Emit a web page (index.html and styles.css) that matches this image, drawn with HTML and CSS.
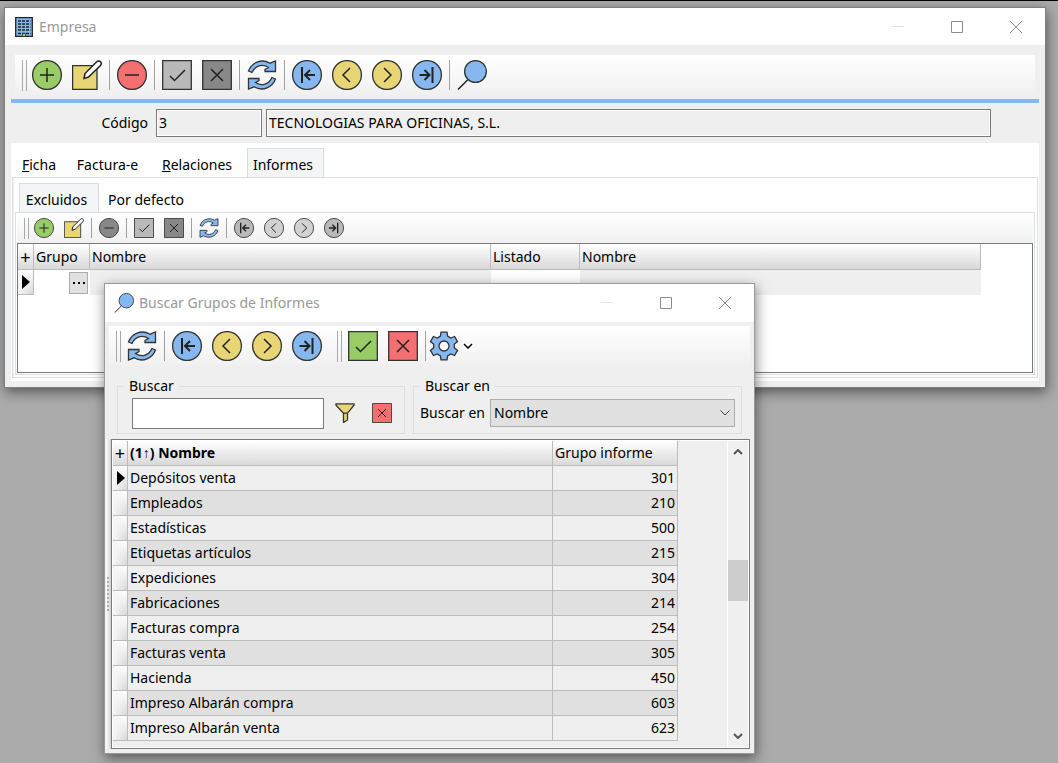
FILE: index.html
```html
<!DOCTYPE html>
<html lang="es">
<head>
<meta charset="utf-8">
<title>Empresa</title>
<link rel="stylesheet" href="styles.css">
</head>
<body>
<svg class="sprite" aria-hidden="true">
  <symbol id="add" viewBox="0 0 30 30"><circle class="shape" cx="15" cy="15" r="14.4"/><path class="stroke" d="M15 8v14M8 15h14"/></symbol>
  <symbol id="remove" viewBox="0 0 30 30"><circle class="shape" cx="15" cy="15" r="14.4"/><path class="stroke" d="M8 15h14"/></symbol>
  <symbol id="edit" viewBox="0 0 30 30"><path class="shape" d="M.6 5.600h24.400v23.800H.6z"/><path class="pen" d="M12 18.500l1-5L24.500 2c2.500-2.500 6.500.5 4 3.500L16.500 17z"/></symbol>
  <symbol id="check" viewBox="0 0 30 30"><path class="shape" d="M.7.7h28.600v28.600H.7z"/><path class="stroke" d="M8 16l4.500 4.500L23 10"/></symbol>
  <symbol id="cross" viewBox="0 0 30 30"><path class="shape" d="M.7.7h28.600v28.600H.7z"/><path class="stroke" d="M9 9l12 12M21 9L9 21"/></symbol>
  <symbol id="refresh" viewBox="0 0 30 30"><path class="shape" d="M1.500 11C4.500 3 14-2 23 3.200L28.500 1v10.500H18v-2l3.500-2C15 3 8 6 5 12.500zM28.500 19C25.500 27 16 32 7 26.800L1.500 29V18.500H12v2l-3.500 2C15 27 22 24 25 17.500z"/></symbol>
  <symbol id="first" viewBox="0 0 30 30"><circle class="shape" cx="15" cy="15" r="14.4"/><path class="stroke heavy" d="M10 7v16M23 15H13.500M18 10l-5 5 5 5"/></symbol>
  <symbol id="prev" viewBox="0 0 30 30"><circle class="shape" cx="15" cy="15" r="14.4"/><path class="stroke" d="M18 8l-7 7 7 7"/></symbol>
  <symbol id="next" viewBox="0 0 30 30"><circle class="shape" cx="15" cy="15" r="14.4"/><path class="stroke" d="M12 8l7 7-7 7"/></symbol>
  <symbol id="last" viewBox="0 0 30 30"><circle class="shape" cx="15" cy="15" r="14.4"/><path class="stroke heavy" d="M20.500 7v16M7.500 15H17M12.500 10l5 5-5 5"/></symbol>
  <symbol id="search" viewBox="0 0 30 30"><path class="stroke" d="M1 29.500L11 19.500"/><circle class="shape" cx="18.500" cy="11.500" r="10.900"/></symbol>
  <symbol id="gear" viewBox="0 0 30 30"><path class="shape" d="M11.400 5.100L12 1.100h6l.6 4L21.800 7l3.800-1.500 2.900 5.100-3.200 2.600v3.600l3.200 2.600-2.900 5.100-3.800-1.500-3.200 1.900-.6 4h-6l-.6-4L8.200 23l-3.800 1.500-2.900-5.100 3.200-2.600v-3.600l-3.200-2.600 2.900-5.100L8.200 7z"/><circle class="hole" cx="15" cy="15" r="5"/></symbol>
  <symbol id="filter" viewBox="0 0 20 20"><path class="shape" d="M1 .8h18v1.400l-6.500 8V17l-4 2.500v-9.300L1 2.200zM8.500 10.200h4"/></symbol>
</svg>

<main class="desktop">
  <section class="window company" aria-label="Empresa">
    <header class="titlebar">
      <svg class="building" viewBox="0 0 18 20" aria-hidden="true"><path class="wall" d="M.7.700h16.600v18.600H.7z"/><path class="panes" d="M3 4h12.500M3 7h12.500M3 10h12.500M3 13h12.500M3 16.500h12.500"/><path class="door" d="M7.500 16.500h3v3h-3z"/></svg>
      <h1>Empresa</h1>
      <div class="controls">
        <button aria-label="Minimizar"><svg viewBox="0 0 12 12"><path class="faint" d="M0 5.500h12"/></svg></button>
        <button aria-label="Maximizar"><svg viewBox="0 0 12 12"><path d="M.5.500h11v11H.5z"/></svg></button>
        <button aria-label="Cerrar"><svg viewBox="0 0 12 12"><path d="M0 0l12 12M12 0L0 12"/></svg></button>
      </div>
    </header>
    <div class="company-body">
      <div class="toolbar" role="toolbar">
        <span class="grip"></span>
        <button class="green" aria-label="Añadir"><svg><use href="#add"/></svg></button>
        <button class="yellow" aria-label="Editar"><svg><use href="#edit"/></svg></button>
        <span class="sep"></span>
        <button class="red" aria-label="Eliminar"><svg><use href="#remove"/></svg></button>
        <span class="sep"></span>
        <button class="silver" aria-label="Aceptar"><svg><use href="#check"/></svg></button>
        <button class="gray" aria-label="Cancelar"><svg><use href="#cross"/></svg></button>
        <span class="sep"></span>
        <button class="blue" aria-label="Actualizar"><svg><use href="#refresh"/></svg></button>
        <span class="sep"></span>
        <button class="blue" aria-label="Primero"><svg><use href="#first"/></svg></button>
        <button class="yellow" aria-label="Anterior"><svg><use href="#prev"/></svg></button>
        <button class="yellow" aria-label="Siguiente"><svg><use href="#next"/></svg></button>
        <button class="blue" aria-label="Último"><svg><use href="#last"/></svg></button>
        <span class="sep"></span>
        <button class="blue" aria-label="Buscar"><svg><use href="#search"/></svg></button>
      </div>
      <hr class="accent">
      <div class="code-row">
        <label for="code">Código</label>
        <input id="code" class="field code" value="3" readonly>
        <input class="field name" aria-label="Nombre de la empresa" value="TECNOLOGIAS PARA OFICINAS, S.L." readonly>
      </div>
      <div class="sheet">
        <div class="tabs main-tabs" role="tablist">
          <button role="tab"><u>F</u>icha</button>
          <button role="tab">Factura-e</button>
          <button role="tab"><u>R</u>elaciones</button>
          <button role="tab" class="active" aria-selected="true">Informes</button>
        </div>
        <div class="page outer-page">
          <div class="tabs sub-tabs" role="tablist">
            <button role="tab" class="active" aria-selected="true">Excluidos</button>
            <button role="tab">Por defecto</button>
          </div>
          <div class="page inner-page">
            <div class="toolbar small" role="toolbar">
              <span class="grip"></span>
              <button class="green" aria-label="Añadir"><svg><use href="#add"/></svg></button>
              <button class="yellow" aria-label="Editar"><svg><use href="#edit"/></svg></button>
              <span class="sep"></span>
              <button class="gray" aria-label="Eliminar"><svg><use href="#remove"/></svg></button>
              <span class="sep"></span>
              <button class="silver" aria-label="Aceptar"><svg><use href="#check"/></svg></button>
              <button class="gray" aria-label="Cancelar"><svg><use href="#cross"/></svg></button>
              <span class="sep"></span>
              <button class="blue" aria-label="Actualizar"><svg><use href="#refresh"/></svg></button>
              <span class="sep"></span>
              <button class="silver" aria-label="Primero"><svg><use href="#first"/></svg></button>
              <button class="pale" aria-label="Anterior"><svg><use href="#prev"/></svg></button>
              <button class="pale" aria-label="Siguiente"><svg><use href="#next"/></svg></button>
              <button class="silver" aria-label="Último"><svg><use href="#last"/></svg></button>
            </div>
            <div class="report-grid">
              <table>
                <colgroup><col class="c-mark"><col class="c-group"><col class="c-name"><col class="c-list"><col class="c-name"></colgroup>
                <thead><tr><th class="plus">+</th><th>Grupo</th><th>Nombre</th><th>Listado</th><th>Nombre</th></tr></thead>
                <tbody><tr><td class="mark"><i class="pointer"></i></td><td class="pick"><button class="more" aria-label="Elegir grupo"><svg viewBox="0 0 12 2"><path d="M0 0h2v2H0zM5 0h2v2H5zM10 0h2v2h-2z"/></svg></button></td><td class="locked"></td><td></td><td class="locked"></td></tr></tbody>
              </table>
            </div>
          </div>
        </div>
      </div>
    </div>
  </section>

  <section class="window finder" aria-label="Buscar Grupos de Informes">
    <header class="titlebar">
      <svg class="lens blue" aria-hidden="true"><use href="#search"/></svg>
      <h2>Buscar Grupos de Informes</h2>
      <div class="controls">
        <button aria-label="Minimizar"><svg viewBox="0 0 12 12"><path class="faint" d="M0 5.500h12"/></svg></button>
        <button aria-label="Maximizar"><svg viewBox="0 0 12 12"><path d="M.5.500h11v11H.5z"/></svg></button>
        <button aria-label="Cerrar"><svg viewBox="0 0 12 12"><path d="M0 0l12 12M12 0L0 12"/></svg></button>
      </div>
    </header>
    <div class="finder-body">
      <div class="toolbar" role="toolbar">
        <span class="grip"></span>
        <button class="blue" aria-label="Actualizar"><svg><use href="#refresh"/></svg></button>
        <span class="sep"></span>
        <button class="blue" aria-label="Primero"><svg><use href="#first"/></svg></button>
        <button class="yellow" aria-label="Anterior"><svg><use href="#prev"/></svg></button>
        <button class="yellow" aria-label="Siguiente"><svg><use href="#next"/></svg></button>
        <button class="blue" aria-label="Último"><svg><use href="#last"/></svg></button>
        <span class="grip second"></span>
        <button class="green" aria-label="Aceptar"><svg><use href="#check"/></svg></button>
        <button class="red" aria-label="Cancelar"><svg><use href="#cross"/></svg></button>
        <span class="sep"></span>
        <button class="blue options" aria-label="Opciones"><svg><use href="#gear"/></svg><svg class="caret" viewBox="0 0 10 6"><path d="M1 1l4 4 4-4"/></svg></button>
      </div>
      <div class="filters">
        <fieldset class="search-box">
          <legend>Buscar</legend>
          <input class="query" aria-label="Buscar">
          <button class="yellow mini" aria-label="Filtrar"><svg><use href="#filter"/></svg></button>
          <button class="red mini" aria-label="Quitar filtro"><svg><use href="#cross"/></svg></button>
        </fieldset>
        <fieldset class="scope-box">
          <legend>Buscar en</legend>
          <label for="scope">Buscar en</label>
          <div class="select-wrap">
            <select id="scope"><option>Nombre</option></select>
            <svg class="chevron" viewBox="0 0 10 6"><path d="M.5.500L5 5 9.500.500"/></svg>
          </div>
        </fieldset>
      </div>
      <div class="results">
        <div class="splitter"><span></span></div>
        <div class="result-grid">
          <div class="table-area">
            <table>
              <colgroup><col class="c-mark"><col><col class="c-code"></colgroup>
              <thead><tr><th class="plus">+</th><th class="sorted">(1<span class="arrow">↑</span>) Nombre</th><th>Grupo informe</th></tr></thead>
              <tbody>
                <tr><td class="mark"><i class="pointer"></i></td><td>Depósitos venta</td><td>301</td></tr>
                <tr><td class="mark"></td><td>Empleados</td><td>210</td></tr>
                <tr><td class="mark"></td><td>Estadísticas</td><td>500</td></tr>
                <tr><td class="mark"></td><td>Etiquetas artículos</td><td>215</td></tr>
                <tr><td class="mark"></td><td>Expediciones</td><td>304</td></tr>
                <tr><td class="mark"></td><td>Fabricaciones</td><td>214</td></tr>
                <tr><td class="mark"></td><td>Facturas compra</td><td>254</td></tr>
                <tr><td class="mark"></td><td>Facturas venta</td><td>305</td></tr>
                <tr><td class="mark"></td><td>Hacienda</td><td>450</td></tr>
                <tr><td class="mark"></td><td>Impreso Albarán compra</td><td>603</td></tr>
                <tr><td class="mark"></td><td>Impreso Albarán venta</td><td>623</td></tr>
              </tbody>
            </table>
          </div>
          <div class="scrollbar">
            <button aria-label="Subir"><svg viewBox="0 0 10 6"><path d="M1 5l4-4 4 4"/></svg></button>
            <div class="track"><span class="thumb"></span></div>
            <button aria-label="Bajar"><svg viewBox="0 0 10 6"><path d="M1 1l4 4 4-4"/></svg></button>
          </div>
        </div>
      </div>
    </div>
  </section>
</main>
</body>
</html>
```

FILE: styles.css
```css
* { box-sizing: border-box; }

body {
  margin: 0;
  font-family: "Noto Sans", "Open Sans", sans-serif;
  font-size: 14px;
  line-height: 20px;
  color: #000;
}

button, input, select { font: inherit; color: inherit; margin: 0; }
button { border: 0; padding: 0; background: none; }
svg { display: block; fill: none; }

.sprite { position: absolute; width: 0; height: 0; }
.shape { fill: var(--tone); stroke: #333; stroke-width: 1.3; }
.stroke { stroke: #222; stroke-width: 1.5; }
.heavy { stroke-width: 2; }
.pen { fill: #fff; stroke: #222; stroke-width: 1.5; }
.hole { fill: #fafafa; stroke: #333; stroke-width: 1.3; }

.green { --tone: #99cc66; }
.yellow { --tone: #e8d575; }
.red { --tone: #f47070; }
.blue { --tone: #85b8f0; }
.silver { --tone: #b9b9b9; }
.gray { --tone: #888; }
.pale { --tone: #d2d2d2; }

.desktop {
  position: relative;
  min-height: 100vh;
  overflow: hidden;
  background: #ababab;
  border-top: 1px solid #000;
}

/* Windows */
.window {
  position: absolute;
  background: #efefef;
  border: 1px solid #808080;
  box-shadow: 1px 4px 12px rgba(0, 0, 0, .5);
}
.company { left: 4px; right: 12px; top: 6px; }
.finder { left: 104px; top: 282px; width: 651px; border-color: #999; }

.titlebar {
  display: flex;
  align-items: center;
  height: 37px;
  background: #fff;
  color: #999;
  padding-left: 10px;
}
.finder .titlebar { height: 38px; padding-left: 9px; }
.titlebar h1, .titlebar h2 { margin: 0; font-size: 14px; font-weight: 400; }
.building { width: 18px; height: 20px; margin-right: 6px; }
.wall { fill: #85b8f0; stroke: #222; stroke-width: 1.3; }
.panes { stroke: #222; stroke-width: 1.5; stroke-dasharray: 3 1; }
.door { fill: #99cc66; stroke: #222; stroke-width: .6; }
.lens { width: 20px; height: 20px; margin-right: 5px; }
.controls { display: flex; margin-left: auto; }
.controls button { width: 59px; height: 37px; display: grid; place-items: center; }
.controls svg { width: 12px; height: 12px; stroke: #8c8c8c; }
.controls .faint { stroke: #e2e2e2; }

/* Toolbars */
.toolbar {
  display: flex;
  align-items: center;
  height: 40px;
  padding-left: 7px;
  background: linear-gradient(#fff, #f0f0f0);
}
.toolbar button { width: 40px; height: 40px; display: grid; place-items: center; }
.toolbar button svg { width: 30px; height: 30px; }
.grip {
  width: 5px;
  height: 31px;
  border: solid #a8a8a8;
  border-width: 0 1px;
}
.grip.second { margin: 0 1px 0 10px; }
.sep { width: 5px; height: 30px; background: linear-gradient(#a0a0a0, #a0a0a0) center / 1px no-repeat; }
.toolbar.small { height: 30px; }
.toolbar.small button { width: 30px; height: 30px; }
.toolbar.small button svg { width: 20px; height: 20px; }
.small .grip { height: 21px; }
.small .sep { height: 20px; }
.toolbar .options { display: flex; align-items: center; gap: 4px; width: 50px; padding-left: 1px; }
.toolbar .options .caret { width: 10px; height: 6px; stroke: #000; stroke-width: 1.5; }

/* Company window */
.company-body { padding: 10px 6px 6px; }
.company-body > .toolbar { margin: 0 4px; }
.accent { height: 4px; margin: 4px 0 6px; border: 0; background: #85b8f0; }
.code-row { display: flex; align-items: center; padding-right: 48px; }
.code-row label { flex: 0 0 145px; padding-right: 8px; text-align: right; }
.field {
  height: 28px;
  padding: 0 2px 2px;
  border: 1px solid #7a7a7a;
  border-radius: 0;
  background: #efefef;
  box-shadow: inset 0 0 0 1px #fff;
}
.field.code { width: 106px; margin-right: 4px; }
.field.name { flex: 1; min-width: 0; }

.sheet { margin-top: 6px; padding: 5px 1px 3px; background: #fff; }
.tabs { display: flex; }
.tabs button { height: 29px; padding: 4px 0 0; border: 1px solid transparent; border-bottom: 0; white-space: nowrap; }
.tabs .active { background: #f3f5f7; border-color: #dadcdf; }
.main-tabs { padding-left: 4px; }
.main-tabs button:nth-child(1) { width: 46px; }
.main-tabs button:nth-child(2) { width: 91px; }
.main-tabs button:nth-child(3) { width: 88px; }
.main-tabs button:nth-child(4) { width: 77px; margin-left: 6px; padding-right: 5px; }
.page { border: 1px solid #dcdfe2; }
.outer-page { padding: 5px 2px 2px 2px; box-shadow: inset 1px 0 #f0f0f0; }
.sub-tabs { padding-left: 4px; }
.sub-tabs button:nth-child(1) { width: 80px; padding-right: 5px; }
.sub-tabs button:nth-child(2) { width: 94px; }
.inner-page { padding: 0 1px 1px; }
.inner-page .toolbar { padding-left: 7px; }

/* Tables */
table { border-collapse: separate; border-spacing: 0; table-layout: fixed; }
th, td { height: 25px; padding: 0 2px; overflow: hidden; white-space: nowrap; }
th {
  height: 26px;
  text-align: left;
  font-weight: 400;
  border: solid #bcbcbc;
  border-width: 0 1px 1px 0;
  background: linear-gradient(#fff, #d9d9d9);
}
.plus { padding: 0; text-align: center; font-size: 18px; }
.c-mark { width: 16px; }
.c-group { width: 56px; }
.c-name { width: 401px; }
.c-list { width: 89px; }
.c-code { width: 125px; }
.mark { padding: 0 0 0 4px; background: linear-gradient(90deg, #f6f6f6, transparent), linear-gradient(#fff, #d6d6d6); border: solid #bcbcbc; border-width: 0 1px 1px 0; }
.pointer { display: block; width: 8px; height: 14px; background: #000; clip-path: polygon(0 0, 100% 50%, 0 100%); }

.report-grid { height: 130px; overflow: hidden; border: 1px solid #7a7a7a; background: #fff; }
.report-grid table { width: 963px; }
.locked { background: #efefef; }
.pick { padding: 0 2px 0 1px; }
.more { display: grid; place-items: center; width: 19px; height: 22px; margin-left: auto; border: 1px solid #adadad; background: #e1e1e1; }
.more svg { width: 12px; height: 2px; fill: #000; }

/* Finder window */
.finder-body { padding: 4px 4px 4px 1px; }
.finder-body > .toolbar { margin-left: 3px; }
.finder-body > .toolbar > .grip:first-child { margin-right: 1px; }
.filters { display: flex; gap: 8px; padding: 10px 8px 5px 11px; }
fieldset { display: flex; align-items: center; min-width: 0; height: 58px; margin: 0; padding: 0 0 3px; border: 1px solid #dedede; }
legend { padding: 0 5px; line-height: 20px; }
.search-box { flex: 0 0 288px; padding-left: 14px; }
.search-box legend { margin-left: -8px; }
.query { width: 192px; height: 31px; border: 1px solid #7a7a7a; border-radius: 0; background: #fff; }
.mini { width: 20px; height: 20px; margin-left: 11px; }
.mini svg { width: 20px; height: 20px; }
.mini + .mini { margin-left: 17px; }
.scope-box { flex: 1; padding-left: 6px; padding-right: 6px; }
.scope-box label { flex: 0 0 70px; }
.select-wrap { position: relative; flex: 1; }
select { display: block; appearance: none; width: 100%; height: 28px; padding: 0 3px; border: 1px solid #adadad; border-radius: 0; background: #e1e1e1; }
.chevron { position: absolute; right: 5px; top: 11px; width: 10px; height: 6px; stroke: #444; pointer-events: none; }

.results { display: flex; }
.splitter { display: grid; align-items: center; width: 5px; background: linear-gradient(90deg, #fff, #d2d2d2); }
.splitter span { width: 2px; height: 34px; margin-left: 1px; background: repeating-linear-gradient(#aaa 0 2px, transparent 2px 4px); }
.result-grid { flex: 1; display: flex; min-width: 0; height: 310px; padding: 1px; border: 1px solid #7a7a7a; background: #fff; }
.table-area { flex: 1; min-width: 0; padding-right: 49px; background: #efefef; }
.result-grid table { width: 100%; }
.result-grid th { height: 25px; }
.result-grid .c-mark { width: 15px; }
.result-grid td { border: solid #bcbcbc; border-width: 0 1px 1px 0; background: #efefef; }
.result-grid tr:nth-child(even) td:not(.mark) { background: #e0e0e0; }
.result-grid td:last-child { text-align: right; }
.result-grid td.mark { background: linear-gradient(90deg, #f6f6f6, transparent), linear-gradient(#fff, #d6d6d6); }
.result-grid .sorted { font-weight: 700; }
.arrow { font-weight: 400; }
.scrollbar { display: flex; flex-direction: column; width: 20px; margin-left: 1px; background: #f0f0f0; }
.scrollbar button { display: grid; place-items: center; height: 22px; }
.scrollbar svg { width: 10px; height: 6px; stroke: #555; stroke-width: 2; }
.track { flex: 1; display: flex; flex-direction: column; padding-top: 97px; }
.thumb { height: 41px; background: #cdcdcd; }
```
